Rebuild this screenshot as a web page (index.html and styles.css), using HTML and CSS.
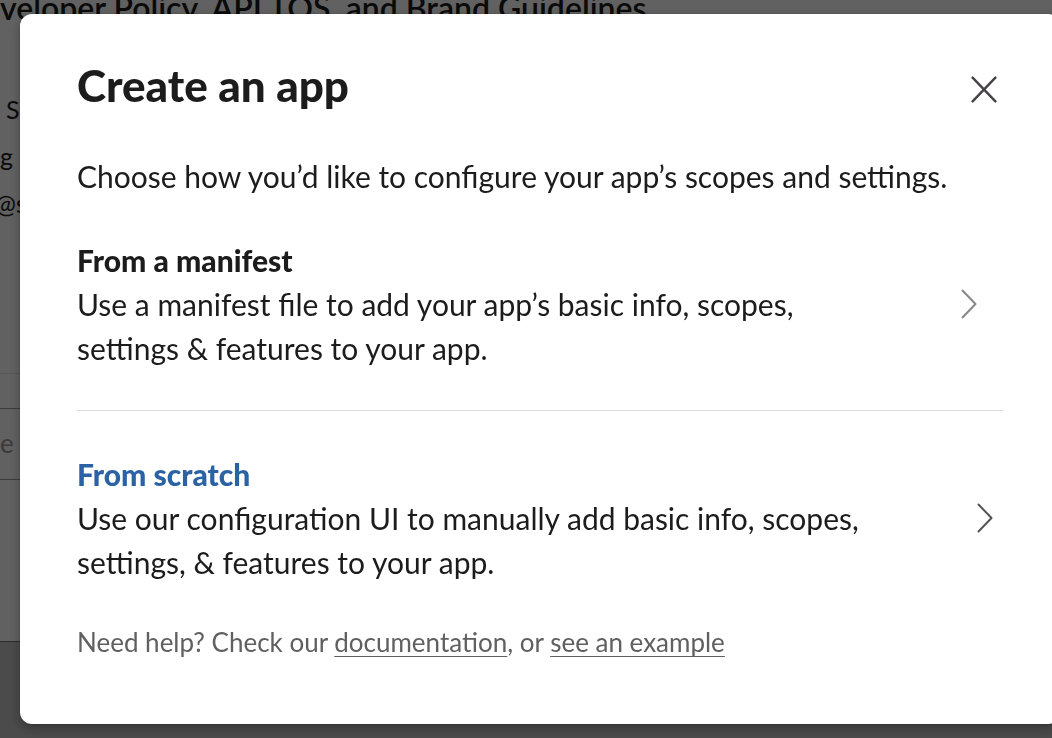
FILE: index.html
```html
<!DOCTYPE html>
<html lang="en">
<head>
<meta charset="utf-8">
<title>Create an app</title>
<link rel="stylesheet" href="styles.css">
</head>
<body>
  <div class="page">
    <div class="page-head">veloper Policy, API TOS, and Brand Guidelines</div>
    <div class="page-side">
      <div class="side-line side-line--indent">Slack</div>
      <div class="side-line">g</div>
      <div class="side-line side-line--out">@slack</div>
      <div class="side-rule"></div>
      <div class="side-input">e</div>
      <div class="side-gap"></div>
    </div>
    <div class="page-foot"></div>
  </div>

  <div class="overlay"></div>

  <div class="modal" role="dialog" aria-labelledby="modal-title">
    <div class="modal-head">
      <h1 class="modal-title" id="modal-title">Create an app</h1>
      <button class="close" type="button" aria-label="Close">
        <svg width="26" height="27" viewBox="0 0 26 27" aria-hidden="true">
          <path d="M1.6 1.6 L24.4 25.4 M24.4 1.6 L1.6 25.4" fill="none" stroke="currentColor" stroke-width="2.4" stroke-linecap="round"/>
        </svg>
      </button>
    </div>

    <p class="intro">Choose how you’d like to configure your app’s scopes and settings.</p>

    <div class="options">
      <a class="option" href="#">
        <div class="option-text">
          <div class="option-title">From a manifest</div>
          <div class="option-desc">Use a manifest file to add your app’s basic info, scopes, settings &amp; features to your app.</div>
        </div>
        <svg class="chev" width="16" height="30" viewBox="0 0 16 30" aria-hidden="true">
          <path d="M1.5 1.5 L14.5 15 L1.5 28.5" fill="none" stroke="currentColor" stroke-width="2" stroke-linecap="round" stroke-linejoin="round"/>
        </svg>
      </a>
      <a class="option option--hover" href="#">
        <div class="option-text">
          <div class="option-title">From scratch</div>
          <div class="option-desc">Use our configuration UI to manually add basic info, scopes, settings, &amp; features to your app.</div>
        </div>
        <svg class="chev" width="16" height="30" viewBox="0 0 16 30" aria-hidden="true">
          <path d="M1.5 1.5 L14.5 15 L1.5 28.5" fill="none" stroke="currentColor" stroke-width="2" stroke-linecap="round" stroke-linejoin="round"/>
        </svg>
      </a>
    </div>

    <p class="help">Need help? Check our <a href="#">documentation</a>, or <a href="#">see an example</a></p>
  </div>
</body>
</html>
```

FILE: styles.css
```css
html, body {
  margin: 0;
  padding: 0;
}

body {
  font-family: Lato, "Noto Sans", "Liberation Sans", sans-serif;
  color: #1d1c1d;
  background: #ffffff;
  overflow: hidden;
}

/* ---------- page behind the dialog ---------- */
.page {
  height: 738px;
  overflow: hidden;
  display: flex;
  flex-direction: column;
  background: #ffffff;
}

.page-head {
  margin-top: -10px;
  font-size: 32px;
  line-height: 36px;
  font-weight: 600;
  white-space: nowrap;
  color: #1d1c1d;
}

.page-side {
  width: 20px;
  overflow: hidden;
  padding-top: 60px;
  display: flex;
  flex-direction: column;
}

.side-line {
  font-size: 25px;
  line-height: 47px;
  white-space: nowrap;
  color: #1d1c1d;
}

.side-line--indent {
  padding-left: 6px;
}

.side-line--out {
  text-indent: -5px;
}

.side-rule {
  margin-top: 146px;
  height: 1px;
  background: #e6e6e6;
}

.side-input {
  margin-top: 34px;
  height: 70px;
  border-top: 1px solid #9a9a9a;
  border-bottom: 1px solid #9a9a9a;
  font-size: 26px;
  line-height: 68px;
  color: #9a9a9a;
}

.side-gap {
  height: 161px;
  border-bottom: 1px solid #777777;
}

.page-foot {
  flex: 1;
  background: #c4c4c4;
}

/* ---------- overlay ---------- */
.overlay {
  position: fixed;
  inset: 0;
  background: rgba(0, 0, 0, 0.62);
}

/* ---------- dialog ---------- */
.modal {
  position: fixed;
  left: 20px;
  top: 14px;
  width: 1040px;
  height: 710px;
  box-sizing: border-box;
  padding: 45px 57px 0;
  background: #ffffff;
  border-radius: 12px;
  box-shadow: 0 0 0 1px rgba(0, 0, 0, 0.06), 0 4px 12px rgba(0, 0, 0, 0.3);
  display: flex;
  flex-direction: column;
}

.modal-head {
  display: flex;
  justify-content: space-between;
  align-items: flex-start;
}

.modal-title {
  margin: 0;
  font-size: 44px;
  line-height: 52px;
  font-weight: 900;
  color: #1d1c1d;
}

.close {
  width: 38px;
  height: 38px;
  margin-top: 11px;
  padding: 0;
  border: 0;
  background: none;
  color: #454245;
  display: flex;
  align-items: center;
  justify-content: center;
  cursor: pointer;
}

.intro {
  margin: 43px 0 0;
  font-size: 30px;
  line-height: 44px;
}

.options {
  display: flex;
  flex-direction: column;
}

.option {
  display: flex;
  align-items: center;
  justify-content: space-between;
  padding: 40px 0;
  text-decoration: none;
  color: #1d1c1d;
}

.option + .option {
  padding-top: 41px;
  border-top: 1px solid #dddddd;
}

.option-text {
  max-width: 810px;
}

.option-title {
  font-size: 30px;
  line-height: 44px;
  font-weight: 900;
}

.option-desc {
  font-size: 30px;
  line-height: 44px;
}

.chev {
  flex: none;
  margin-right: 26px;
  color: #868686;
}

.option--hover .option-title {
  color: #2a62a4;
}

.option--hover .chev {
  margin-right: 10px;
  color: #555555;
}

.help {
  margin: 0;
  font-size: 26px;
  line-height: 36px;
  color: #616061;
}

.help a {
  color: #616061;
  text-decoration: underline;
  text-underline-offset: 4px;
  text-decoration-thickness: 1px;
}
```
